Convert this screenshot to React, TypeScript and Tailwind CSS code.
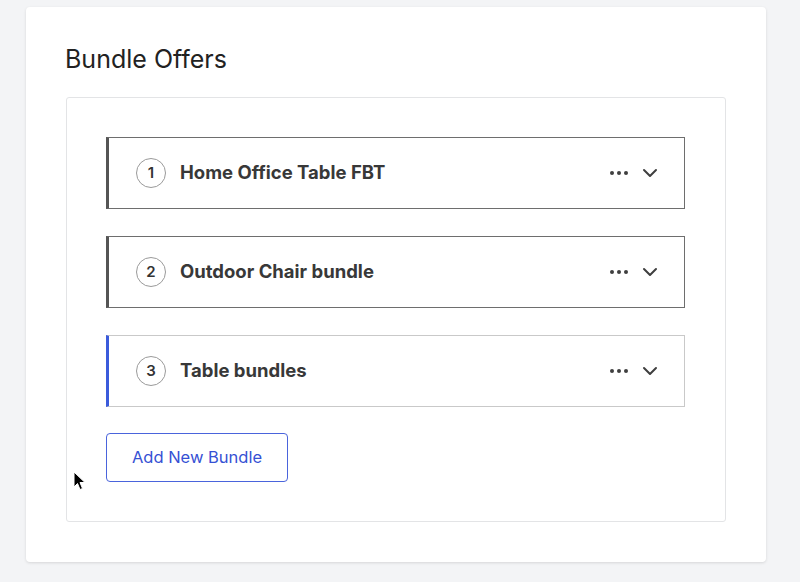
import { ChevronDown } from 'lucide-react';

interface Bundle {
  id: number;
  name: string;
  active?: boolean;
}

const bundles: Bundle[] = [
  { id: 1, name: 'Home Office Table FBT' },
  { id: 2, name: 'Outdoor Chair bundle' },
  { id: 3, name: 'Table bundles', active: true },
];

const Dots = () => (
  <svg width="20" height="6" viewBox="0 0 20 6" className="text-[#3f3f3f]">
    <circle cx="3" cy="3" r="2" fill="currentColor" />
    <circle cx="10" cy="3" r="2" fill="currentColor" />
    <circle cx="17" cy="3" r="2" fill="currentColor" />
  </svg>
);

const BundleRow = ({ bundle }: { bundle: Bundle }) => (
  <div
    className={`flex h-[72px] items-center border border-l-[3px] bg-white pl-[27px] pr-[22px] ${
      bundle.active ? 'border-[#c9c9c9] border-l-[#3b5bdb]' : 'border-[#6e6e6e] border-l-[#555555]'
    }`}
  >
    <div className="flex h-[30px] w-[30px] items-center justify-center rounded-full border border-[#9a9a9a] text-[15px] font-semibold text-[#333]">
      {bundle.id}
    </div>
    <span className="ml-[14px] flex-1 text-[18.5px] font-bold text-[#383838]">{bundle.name}</span>
    <div className="flex items-center gap-[9px]">
      <Dots />
      <ChevronDown className="h-6 w-6 text-[#3f3f3f]" strokeWidth={2} />
    </div>
  </div>
);

export default function App() {
  return (
    <div
      className="relative min-h-[582px] w-[800px] bg-[#f3f4f6] pl-[26px] pt-[7px]"
      style={{ fontFamily: 'Inter, "Noto Sans", sans-serif' }}
    >
      <div className="w-[740px] rounded-[4px] bg-white px-10 pb-10 pt-[36px] shadow-[0_1px_3px_rgba(0,0,0,0.12)]">
        <h1 className="-ml-px mb-[22px] text-[25px] leading-8 text-[#222]">Bundle Offers</h1>
        <div className="flex flex-col rounded-[3px] border border-[#e3e4e6] py-[39px] pl-[39px] pr-[40px]">
          <div className="flex flex-col gap-[27px]">
            {bundles.map((b) => (
              <BundleRow key={b.id} bundle={b} />
            ))}
          </div>
          <div className="mt-[26px]">
            <button className="h-[49px] w-[182px] rounded-[4px] border border-[#4a64dc] bg-white text-[16.5px] text-[#3651d4]">
              Add New Bundle
            </button>
          </div>
        </div>
      </div>
      <svg className="absolute left-[73px] top-[471px]" width="14" height="20" viewBox="0 0 14 20">
        <path d="M1 1 L1 16 L4.5 12.5 L7 18.5 L9.5 17.5 L7 11.5 L12 11.5 Z" fill="#000" stroke="#fff" strokeWidth="1" />
      </svg>
    </div>
  );
}
